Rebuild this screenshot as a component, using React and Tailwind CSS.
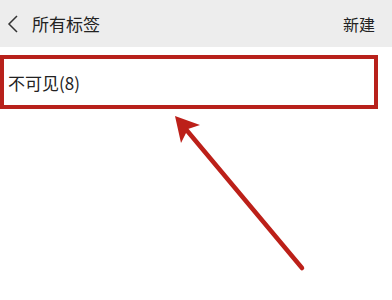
export default function App() {
  return (
    <div className="relative w-[392px] h-[300px] bg-white overflow-hidden" style={{ fontFamily: '"Noto Sans CJK SC", "Noto Sans", sans-serif' }}>
      <div className="h-[47px] bg-[#ededed] flex items-center justify-between pl-[7px] pr-[17px] text-[#222]">
        <div className="flex items-center">
          <svg width="12" height="20" viewBox="0 0 12 20" className="mr-[13px]">
            <path d="M10 2 L2 10 L10 18" fill="none" stroke="#333" strokeWidth="1.5" />
          </svg>
          <span className="text-[17px] leading-none">所有标签</span>
        </div>
        <span className="text-[16px] leading-none">新建</span>
      </div>
      <div className="mt-[8px] w-[378px] h-[54px] border-[4px] border-[#b8211b] flex items-center pl-[4px]">
        <span className="text-[17px] leading-none text-[#222]">不可见(8)</span>
      </div>
      <svg className="absolute left-0 top-0" width="392" height="300" viewBox="0 0 392 300">
        <line x1="302" y1="268" x2="184" y2="127" stroke="#bc2019" strokeWidth="4.5" strokeLinecap="round" />
        <polygon points="175,116 200,125 188,129 181,143" fill="#bc2019" />
      </svg>
    </div>
  );
}
